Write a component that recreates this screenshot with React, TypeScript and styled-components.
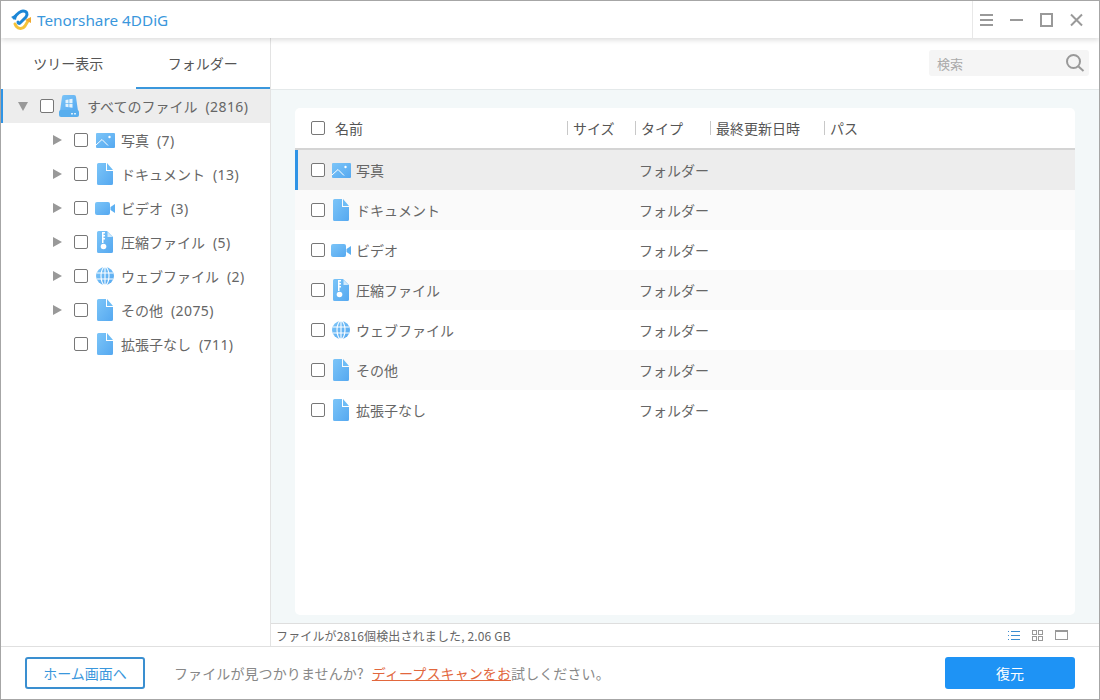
import styled, { createGlobalStyle } from "styled-components";
import type { ReactNode } from "react";

const Global = createGlobalStyle`
  html, body {
    margin: 0;
    padding: 0;
    background: #fff;
  }
  body {
    font-family: "Noto Sans CJK JP", "Noto Sans", sans-serif;
    color: #666;
  }
  * { box-sizing: border-box; }
`;

const Window = styled.div`
  width: 1100px;
  height: 700px;
  border: 1px solid #a6a6a6;
  display: flex;
  flex-direction: column;
  overflow: hidden;
  background: #fff;
`;

const TitleBar = styled.header`
  height: 37px;
  flex: none;
  display: flex;
  align-items: center;
  justify-content: space-between;
  background: #fff;
  box-shadow: 0 2px 5px rgba(0, 0, 0, 0.14);
  position: relative;
  z-index: 2;
`;

const Brand = styled.div`
  display: flex;
  align-items: center;
  padding-left: 9px;
  gap: 5px;
  font-family: "Noto Sans", sans-serif;
  font-size: 15.3px;
  color: #3a97dc;
`;

const Controls = styled.div`
  height: 37px;
  width: 127px;
  border-left: 1px solid #e8e8e8;
  display: flex;
  align-items: center;
  padding-left: 7px;
  gap: 17px;
`;

const Body = styled.div`
  flex: 1;
  min-height: 0;
  display: flex;
`;

const Sidebar = styled.aside`
  width: 270px;
  flex: none;
  border-right: 1px solid #e3e3e3;
`;

const Tabs = styled.div`
  height: 51px;
  display: flex;
`;

const Tab = styled.div<{ $active?: boolean }>`
  flex: 1;
  display: flex;
  align-items: center;
  justify-content: center;
  font-size: 14px;
  color: #555;
  border-bottom: 2px solid ${(p) => (p.$active ? "#3a97dc" : "transparent")};
`;

const TreeRow = styled.div<{ $root?: boolean }>`
  height: 34px;
  display: flex;
  align-items: center;
  padding-left: ${(p) => (p.$root ? "17px" : "52px")};
  background: ${(p) => (p.$root ? "#ededed" : "transparent")};
  box-shadow: ${(p) => (p.$root ? "inset 2px 0 0 #2f94e6" : "none")};
  font-size: 14px;
  color: #666;
`;

const Count = styled.span`
  font-family: "Noto Sans", sans-serif;
  margin-left: 8px;
  letter-spacing: 0.4px;
`;

const Arrow = styled.span<{ $down?: boolean; $hidden?: boolean }>`
  width: ${(p) => (p.$down ? "22px" : "21px")};
  flex: none;
  display: flex;
  visibility: ${(p) => (p.$hidden ? "hidden" : "visible")};
  &::before {
    content: "";
    width: 0;
    height: 0;
    ${(p) =>
      p.$down
        ? `border-left: 5px solid transparent; border-right: 5px solid transparent; border-top: 9px solid #999;`
        : `border-top: 5px solid transparent; border-bottom: 5px solid transparent; border-left: 9px solid #999;`}
  }
`;

const Check = styled.span`
  width: 14px;
  height: 14px;
  flex: none;
  border: 1px solid #777;
  border-radius: 2px;
  background: #fff;
`;

const TreeIcon = styled.span<{ $root?: boolean }>`
  width: 20px;
  flex: none;
  margin-left: ${(p) => (p.$root ? "5px" : "7px")};
  margin-right: ${(p) => (p.$root ? "8px" : "6px")};
  display: flex;
  justify-content: center;
`;

const Main = styled.main`
  flex: 1;
  min-width: 0;
  display: flex;
  flex-direction: column;
`;

const SearchBar = styled.div`
  height: 52px;
  flex: none;
  display: flex;
  align-items: center;
  justify-content: flex-end;
  padding: 0 10px 1px 0;
  border-bottom: 1px solid #e4e9ea;
`;

const Search = styled.div`
  width: 160px;
  height: 26px;
  background: #f5f5f5;
  border-radius: 3px;
  display: flex;
  align-items: center;
  justify-content: space-between;
  padding: 0 4px 0 8px;
  font-size: 13px;
  color: #aaa;
`;

const Content = styled.div`
  flex: 1;
  min-height: 0;
  background: #f3f8f9;
  padding: 18px 24px 8px 24px;
`;

const Card = styled.section`
  height: 100%;
  background: #fff;
  border-radius: 5px;
  overflow: hidden;
`;

const TableHead = styled.div`
  height: 42px;
  display: flex;
  align-items: center;
  padding-left: 16px;
  border-bottom: 2px solid #d4d4d4;
  font-size: 14px;
  color: #555;
`;

const HeadName = styled.div`
  width: 242px;
  padding-left: 10px;
`;

const HeadCell = styled.div<{ $w: number }>`
  width: ${(p) => p.$w}px;
  flex: none;
  display: flex;
  align-items: center;
  &::before {
    content: "";
    width: 1px;
    height: 14px;
    background: #c8c8c8;
    margin-right: 5px;
  }
`;

const Row = styled.div<{ $selected?: boolean; $striped?: boolean }>`
  height: 40px;
  display: flex;
  align-items: center;
  padding-left: 16px;
  background: ${(p) => (p.$selected ? "#ededed" : p.$striped ? "#fafafa" : "#fff")};
  box-shadow: ${(p) => (p.$selected ? "inset 3px 0 0 #2f94e6" : "none")};
  font-size: 14px;
  color: #666;
`;

const RowIcon = styled.span`
  width: 20px;
  flex: none;
  margin-left: 6px;
  margin-right: 5px;
  display: flex;
  justify-content: center;
`;

const RowName = styled.div`
  width: 283px;
  flex: none;
`;

const StatusBar = styled.div`
  height: 23px;
  flex: none;
  display: flex;
  align-items: center;
  justify-content: space-between;
  padding: 0 31px 0 5px;
  border-top: 1px solid #dedede;
  font-size: 12px;
  letter-spacing: 0.15px;
  color: #666;
`;

const ViewIcons = styled.div`
  display: flex;
  align-items: center;
  gap: 12px;
`;

const Footer = styled.footer`
  height: 53px;
  flex: none;
  display: flex;
  align-items: center;
  padding: 0 24px;
  border-top: 1px solid #e0e0e0;
`;

const HomeButton = styled.button`
  width: 120px;
  height: 32px;
  border: 2px solid #3a8fd0;
  border-radius: 3px;
  background: #fff;
  color: #3a97dc;
  font-family: inherit;
  font-size: 14px;
  padding: 0;
`;

const Hint = styled.div`
  flex: 1;
  margin-left: 29px;
  font-size: 14px;
  letter-spacing: 0.1px;
  color: #888;
`;

const Link = styled.a`
  margin-left: 5px;
  color: #e2673d;
  text-decoration: underline;
`;

const RestoreButton = styled.button`
  width: 130px;
  height: 32px;
  border: none;
  border-radius: 3px;
  background: #1e93f5;
  color: #fff;
  font-family: inherit;
  font-size: 14px;
  padding: 0;
`;

const Defs = styled.svg`
  position: absolute;
  width: 0;
  height: 0;
`;

const Logo = () => (
  <svg width="22" height="22" viewBox="0 0 22 22" fill="none">
    <path d="M5 15c2 5 7 6 10 2l3-5" stroke="#f5c33b" strokeWidth="3" strokeLinecap="round" />
    <path d="M15 11l6-3v6z" fill="#f0a92e" />
    <path d="M4 9c3-4 6-7 9-7 4 0 5 3 3 6l-6 6c-1 1-2 0-2-1" stroke="#1c86d6" strokeWidth="3" strokeLinecap="round" />
    <path d="M1 8l6-3-1 6z" fill="#1c86d6" />
  </svg>
);

const HamburgerIcon = () => (
  <svg width="13" height="14" viewBox="0 0 13 14" stroke="#999" strokeWidth="2">
    <path d="M0 2h13M0 7h13M0 12h13" />
  </svg>
);

const MinimizeIcon = () => (
  <svg width="13" height="14" viewBox="0 0 13 14" stroke="#999" strokeWidth="2">
    <path d="M0 7h13" />
  </svg>
);

const MaximizeIcon = () => (
  <svg width="13" height="14" viewBox="0 0 13 14" fill="none" stroke="#999" strokeWidth="2">
    <rect x="1" y="1" width="11" height="12" />
  </svg>
);

const CloseIcon = () => (
  <svg width="13" height="14" viewBox="0 0 13 14" stroke="#999" strokeWidth="2">
    <path d="M1 1.500l11 11M12 1.500l-11 11" />
  </svg>
);

const SearchIcon = () => (
  <svg width="20" height="20" viewBox="0 0 20 20" fill="none" stroke="#999" strokeWidth="2">
    <circle cx="8.500" cy="8.500" r="6.500" />
    <path d="M13.500 13.500l5 4.500" />
  </svg>
);

const DriveIcon = () => (
  <svg width="20" height="22" viewBox="0 0 20 22">
    <path d="M3 2a2 2 0 0 1 2-2h10a2 2 0 0 1 2 2l2 14H1z" fill="url(#fileBlue)" />
    <rect x="0" y="15" width="20" height="7" rx="2" fill="#58aeee" />
    <path d="M6.500 5l3-.5V8h-3zM10.300 4.300l3.200-.5V8h-3.200zM6.500 8.700h3v3.500l-3-.5zM10.300 8.700h3.200v4l-3.200-.5z" fill="#e4f3fd" />
    <rect x="12" y="18" width="2" height="1.500" fill="#d8eefc" />
    <rect x="15" y="18" width="2" height="1.500" fill="#d8eefc" />
  </svg>
);

const PhotoIcon = () => (
  <svg width="19" height="15" viewBox="0 0 19 15">
    <rect width="19" height="15" rx="1" fill="url(#fileBlue)" />
    <circle cx="13.500" cy="4" r="1.200" fill="#fff" />
    <path d="M0 12l6-5.500 6 6" fill="none" stroke="#fff" strokeWidth="1" />
  </svg>
);

const FileIcon = () => (
  <svg width="16" height="22" viewBox="0 0 16 22">
    <path d="M1.500 0H9v8h7v12.500a1.500 1.500 0 0 1-1.500 1.500h-13A1.500 1.500 0 0 1 0 20.500v-19A1.500 1.500 0 0 1 1.500 0z" fill="url(#fileBlue)" />
    <path d="M10 0l6 7h-6z" fill="#6dbcf6" />
  </svg>
);

const VideoIcon = () => (
  <svg width="20" height="13" viewBox="0 0 20 13">
    <rect width="15" height="13" rx="2" fill="url(#fileBlue)" />
    <path d="M15.500 5l4.500-3v9l-4.500-3z" fill="#5db0f2" />
  </svg>
);

const ZipIcon = () => (
  <svg width="16" height="22" viewBox="0 0 16 22">
    <path d="M1.500 0H10l6 6v14.500a1.500 1.500 0 0 1-1.500 1.500h-13A1.500 1.500 0 0 1 0 20.500v-19A1.500 1.500 0 0 1 1.500 0z" fill="url(#fileBlue)" />
    <path d="M5 1h3v1.500H6.500V4H8v1.500H6.500V7H8v1.500H6.500V12H5z" fill="#fff" />
    <circle cx="6.500" cy="15.500" r="2.800" fill="#fff" />
    <path d="M10.500 1l5 5h-5z" fill="#d3ebfc" />
  </svg>
);

const GlobeIcon = () => (
  <svg width="18" height="18" viewBox="0 0 18 18">
    <circle cx="9" cy="9" r="9" fill="url(#fileBlue)" />
    <g fill="none" stroke="#fff" strokeWidth="1.100">
      <ellipse cx="9" cy="9" rx="4" ry="9" />
      <path d="M9 0v18M0.500 6h17M0.500 12h17" />
    </g>
  </svg>
);

const ListIcon = () => (
  <svg width="12" height="10" viewBox="0 0 12 10" stroke="#3c8dd0" strokeWidth="1">
    <path d="M0 1.500h1M0 5.500h1M0 9.500h1M3 1.500h9M3 5.500h9M3 9.500h9" />
  </svg>
);

const GridIcon = () => (
  <svg width="11" height="11" viewBox="0 0 11 11" fill="none" stroke="#999" strokeWidth="1">
    <rect x="0.500" y="0.500" width="4" height="4" />
    <rect x="6.500" y="0.500" width="4" height="4" />
    <rect x="0.500" y="6.500" width="4" height="4" />
    <rect x="6.500" y="6.500" width="4" height="4" />
  </svg>
);

const PaneIcon = () => (
  <svg width="13" height="10" viewBox="0 0 13 10" fill="none" stroke="#999">
    <rect x="0.500" y="0.500" width="12" height="9" />
    <path d="M0 1.500h13" />
  </svg>
);

const categories: { name: string; count: number; icon: ReactNode; leaf?: boolean }[] = [
  { name: "写真", count: 7, icon: <PhotoIcon /> },
  { name: "ドキュメント", count: 13, icon: <FileIcon /> },
  { name: "ビデオ", count: 3, icon: <VideoIcon /> },
  { name: "圧縮ファイル", count: 5, icon: <ZipIcon /> },
  { name: "ウェブファイル", count: 2, icon: <GlobeIcon /> },
  { name: "その他", count: 2075, icon: <FileIcon /> },
  { name: "拡張子なし", count: 711, icon: <FileIcon />, leaf: true },
];

const App = () => (
  <>
    <Global />
    <Defs aria-hidden="true">
      <defs>
        <linearGradient id="fileBlue" x1="0" y1="0" x2="1" y2="1">
          <stop offset="0" stopColor="#7cc5f8" />
          <stop offset="1" stopColor="#55a8f0" />
        </linearGradient>
      </defs>
    </Defs>
    <Window>
      <TitleBar>
        <Brand>
          <Logo />
          Tenorshare 4DDiG
        </Brand>
        <Controls>
          <HamburgerIcon />
          <MinimizeIcon />
          <MaximizeIcon />
          <CloseIcon />
        </Controls>
      </TitleBar>
      <Body>
        <Sidebar>
          <Tabs>
            <Tab>ツリー表示</Tab>
            <Tab $active>フォルダー</Tab>
          </Tabs>
          <TreeRow $root>
            <Arrow $down />
            <Check />
            <TreeIcon $root>
              <DriveIcon />
            </TreeIcon>
            すべてのファイル
            <Count>(2816)</Count>
          </TreeRow>
          {categories.map((c) => (
            <TreeRow key={c.name}>
              <Arrow $hidden={c.leaf} />
              <Check />
              <TreeIcon>{c.icon}</TreeIcon>
              {c.name}
              <Count>({c.count})</Count>
            </TreeRow>
          ))}
        </Sidebar>
        <Main>
          <SearchBar>
            <Search>
              検索
              <SearchIcon />
            </Search>
          </SearchBar>
          <Content>
            <Card>
              <TableHead>
                <Check />
                <HeadName>名前</HeadName>
                <HeadCell $w={68}>サイズ</HeadCell>
                <HeadCell $w={75}>タイプ</HeadCell>
                <HeadCell $w={114}>最終更新日時</HeadCell>
                <HeadCell $w={60}>パス</HeadCell>
              </TableHead>
              {categories.map((c, i) => (
                <Row key={c.name} $selected={i === 0} $striped={i % 2 === 1}>
                  <Check />
                  <RowIcon>{c.icon}</RowIcon>
                  <RowName>{c.name}</RowName>
                  フォルダー
                </Row>
              ))}
            </Card>
          </Content>
          <StatusBar>
            ファイルが2816個検出されました, 2.06 GB
            <ViewIcons>
              <ListIcon />
              <GridIcon />
              <PaneIcon />
            </ViewIcons>
          </StatusBar>
        </Main>
      </Body>
      <Footer>
        <HomeButton>ホーム画面へ</HomeButton>
        <Hint>
          ファイルが見つかりませんか? <Link>ディープスキャンをお</Link>試しください。
        </Hint>
        <RestoreButton>復元</RestoreButton>
      </Footer>
    </Window>
  </>
);

export default App;
